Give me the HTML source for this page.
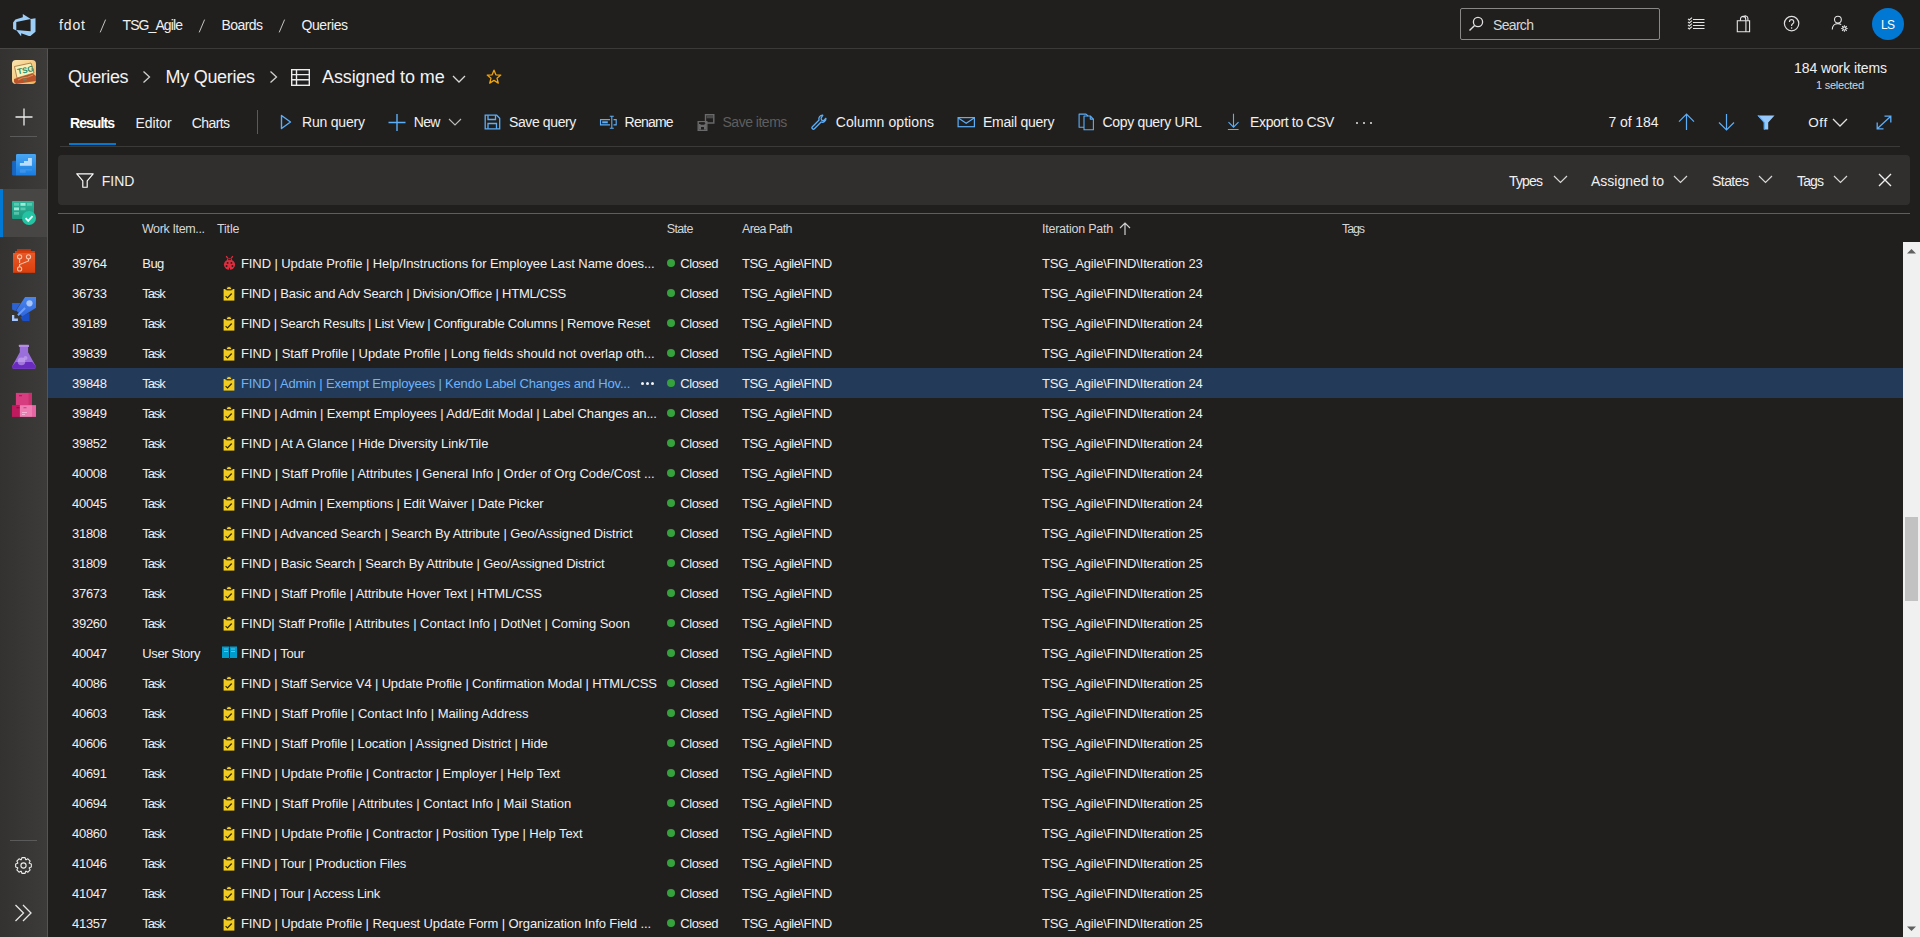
<!DOCTYPE html>
<html><head><meta charset="utf-8"><title>Queries - Boards</title>
<style>
html,body{margin:0;padding:0;width:1920px;height:937px;overflow:hidden;background:#201f1e;font-family:"Liberation Sans",sans-serif;}
.t{position:absolute;white-space:nowrap;}
.b{position:absolute;}
</style></head><body>
<div class="b" style="left:0px;top:48px;width:1920px;height:1px;background:#3b3a39"></div>
<svg class="b" style="left:13px;top:14px;" width="24" height="22" viewBox="0 0 24 22"><path d="M22.5 4.2v13.6l-5.6 4.6-8.7-3.2v3.2L3.3 16.1l14.3 1.1V4.9zM17.8 5.1L9.8 0v3.3L2.4 5.5 0.1 8.4v6.7l3.2 1.4V7.9z" fill="#9ccef8"/></svg>
<div class="t" style="left:59.00px;top:16.14px;font-size:14px;line-height:18px;color:#f0f0f0;letter-spacing:0.875px;">fdot</div>
<svg class="b" style="left:99px;top:19px;" width="8" height="14" viewBox="0 0 8 14"><path d="M6.6 0.6L1.2 13.4" stroke="#c4c4c4" stroke-width="1"/></svg>
<div class="t" style="left:122.50px;top:16.14px;font-size:14px;line-height:18px;color:#f0f0f0;letter-spacing:-0.906px;">TSG_Agile</div>
<svg class="b" style="left:198px;top:19px;" width="8" height="14" viewBox="0 0 8 14"><path d="M6.6 0.6L1.2 13.4" stroke="#c4c4c4" stroke-width="1"/></svg>
<div class="t" style="left:221.50px;top:16.14px;font-size:14px;line-height:18px;color:#f0f0f0;letter-spacing:-0.575px;">Boards</div>
<svg class="b" style="left:278px;top:19px;" width="8" height="14" viewBox="0 0 8 14"><path d="M6.6 0.6L1.2 13.4" stroke="#c4c4c4" stroke-width="1"/></svg>
<div class="t" style="left:301.50px;top:16.14px;font-size:14px;line-height:18px;color:#f0f0f0;letter-spacing:-0.417px;">Queries</div>
<div class="b" style="left:1460px;top:8px;width:200px;height:32px;box-sizing:border-box;border:1px solid #8a8886;border-radius:2px"></div>
<svg class="b" style="left:1468px;top:16px;" width="16" height="16" viewBox="0 0 16 16"><circle cx="10" cy="6" r="4.6" fill="none" stroke="#e0e0e0" stroke-width="1.3"/><path d="M6.6 9.4L1.5 14.5" stroke="#e0e0e0" stroke-width="1.4"/></svg>
<div class="t" style="left:1493.00px;top:16.14px;font-size:14px;line-height:18px;color:#d8d8d8;letter-spacing:-0.675px;">Search</div>
<svg class="b" style="left:1686px;top:16px;" width="20" height="16" viewBox="0 0 20 16"><g stroke="#e6e6e6" stroke-width="1.1" fill="none"><path d="M7 3.5h11.5M7 6.5h11.5M7 9.5h11.5M7 12.5h11.5"/><path d="M2 2.8l1.3 1.2L6 1.6M2 5.8l1.3 1.2L6 4.6M2 8.8l1.3 1.2L6 7.6M2 11.8l1.3 1.2L6 10.6"/></g></svg>
<svg class="b" style="left:1735px;top:15px;" width="18" height="18" viewBox="0 0 18 18"><g stroke="#e6e6e6" stroke-width="1.1" fill="none"><path d="M2.3 5.8h8.6v10.9H2.3zM10.9 5.8h3.7v10.9h-3.7"/><path d="M5.5 5.8V4a2.6 2.6 0 0 1 5.2 0v1.8M8.3 2.3a2.4 2.4 0 0 1 4.6 1v2.5"/></g></svg>
<svg class="b" style="left:1782px;top:15px;" width="18" height="18" viewBox="0 0 18 18"><g stroke="#e0e0e0" stroke-width="1.2" fill="none"><circle cx="9.6" cy="8.6" r="7.2"/><path d="M7.4 6.9a2.2 2.2 0 1 1 3.1 2c-.7.4-.9.8-.9 1.5v.6"/></g><circle cx="9.6" cy="12.9" r="0.75" fill="#e6e6e6"/></svg>
<svg class="b" style="left:1830px;top:15px;" width="20" height="18" viewBox="0 0 20 18"><g stroke="#e6e6e6" stroke-width="1.1" fill="none"><circle cx="7.9" cy="4.6" r="3.4"/><path d="M2.3 14.5c0-3.6 2.4-5.9 5.6-5.9 1.3 0 2.4.4 3.3 1"/><circle cx="14.4" cy="13.5" r="1.6"/><path d="M14.4 10.3v1.3M14.4 15.4v1.3M11.2 13.5h1.3M16.3 13.5h1.3M12.1 11.2l.9.9M15.8 14.9l.9.9M12.1 15.8l.9-.9M15.8 12.1l.9-.9"/></g></svg>
<div class="b" style="left:1872px;top:8px;width:32px;height:32px;border-radius:50%;background:#0078d4"></div>
<div class="t" style="left:1881.00px;top:16.84px;font-size:12px;line-height:16px;color:#ffffff;letter-spacing:-0.625px;">LS</div>
<div class="b" style="left:0px;top:49px;width:47px;height:888px;background:linear-gradient(to right,#333231,#3c3b3a)"></div>
<div class="b" style="left:47px;top:49px;width:1px;height:888px;background:#555555"></div>
<div class="b" style="left:0px;top:48px;width:48px;height:1px;background:#484746"></div>
<div class="b" style="left:0px;top:189px;width:47px;height:48px;background:#474645"></div>
<div class="b" style="left:0px;top:189px;width:3px;height:48px;background:#0078d4"></div>
<div class="b" style="left:10px;top:136px;width:27px;height:1px;background:#5a5a5a"></div>
<div class="b" style="left:10px;top:840px;width:27px;height:1px;background:#5a5a5a"></div>
<svg class="b" style="left:12px;top:60px;" width="24" height="24" viewBox="0 0 24 24"><defs><linearGradient id="tg" x1="0" y1="0" x2="1" y2="1"><stop offset="0" stop-color="#fbe6b0"/><stop offset="1" stop-color="#eeb25a"/></linearGradient></defs><rect width="24" height="24" rx="4" fill="url(#tg)"/><path d="M2 19l18-6 4 3v5l-20 3-2-2z" fill="#b8532a"/><path d="M6 20l4-2 6-1 5-2" stroke="#e9a36a" stroke-width="1.2" fill="none" opacity=".7"/><path d="M2.5 6.5L19 3l3 10-17 5z" fill="#f6f1b8" stroke="#9a5a2a" stroke-width=".7"/><text x="0" y="0" font-size="8" font-weight="bold" fill="#2a8a6a" font-family="Liberation Sans" transform="translate(6 14.5) rotate(-12)">TSG</text><ellipse cx="13" cy="19.5" rx="2" ry="1" fill="#3c9a78"/></svg>
<svg class="b" style="left:15px;top:108px;" width="18" height="18" viewBox="0 0 18 18"><path d="M9 0.5v17M0.5 9h17" stroke="#ececec" stroke-width="1.3"/></svg>
<svg class="b" style="left:12px;top:154px;" width="24" height="22" viewBox="0 0 24 22"><defs><linearGradient id="og" x1="0" y1="0" x2="0" y2="1"><stop offset="0" stop-color="#48a6f2"/><stop offset="1" stop-color="#1a7de0"/></linearGradient></defs><rect x="0.1" y="6.8" width="5" height="14.8" rx="1" fill="#1766c2"/><rect x="4" y="0" width="20" height="21.6" rx="1.2" fill="url(#og)"/><path d="M7.9 11.7H19.9V4H16V7.1H12V9H7.9z" fill="#b9ddfb"/><path d="M7.9 15.2h12v1.3h-12zM7.9 16.5h5.8v2.2H7.9z" fill="#3d94e8"/></svg>
<svg class="b" style="left:11px;top:199px;" width="28" height="28" viewBox="0 0 28 28"><defs><linearGradient id="bg1" x1="0" y1="0" x2="0" y2="1"><stop offset="0" stop-color="#2fb39a"/><stop offset="1" stop-color="#1a9a7e"/></linearGradient></defs><rect x="1" y="2" width="22" height="18" rx="1" fill="url(#bg1)"/><path d="M3 4h5v2.8H3zM9.5 4h5v2.8h-5zM16 4h5v2.8h-5zM3 8.5h5v2.8H3zM9.5 8.5h5v2.8h-5zM3 13h5v2.8H3z" fill="#7fe0c8" opacity=".55"/><path d="M9.5 4h5v2.8h-5zM3 8.5h5v2.8H3z" fill="#c8fff0" opacity=".6"/><circle cx="18" cy="19" r="7" fill="#22c4a4"/><path d="M14.6 19.2l2.6 2.6 4.3-4.6" stroke="#f0fff8" stroke-width="1.9" fill="none"/></svg>
<svg class="b" style="left:12px;top:248px;" width="24" height="26" viewBox="0 0 24 26"><defs><linearGradient id="rg" x1="0" y1="0" x2="0" y2="1"><stop offset="0" stop-color="#e65a2a"/><stop offset="1" stop-color="#dc3e0a"/></linearGradient></defs><rect x="5" y="1.1" width="13.9" height="3" fill="#c4360a"/><rect x="3" y="3" width="19.9" height="2.5" fill="#d63f0c"/><rect x="1" y="5" width="22.1" height="19.8" fill="url(#rg)"/><g stroke="#f6c4ac" stroke-width="1.1" fill="none"><circle cx="7.6" cy="8.8" r="2.1"/><circle cx="16.5" cy="8.8" r="2.1"/><circle cx="7.6" cy="20.9" r="2.1"/><path d="M7.6 10.9V15M16.5 10.9V13L7.6 16.5V18.8"/></g></svg>
<svg class="b" style="left:12px;top:296px;" width="25" height="26" viewBox="0 0 25 26"><defs><linearGradient id="pg" x1="0" y1="0" x2="0" y2="1"><stop offset="0" stop-color="#4a86ef"/><stop offset="1" stop-color="#2f66dc"/></linearGradient></defs><path d="M0.1 6.9h8.5L3.5 15 0.1 13.5z" fill="#2b63d6"/><path d="M8.3 21.3l9.2-4.8V25h-6.8z" fill="#1a4fc8"/><path d="M13.1 1.1H24v10.6L10.3 20.6 4.2 14.4z" fill="url(#pg)"/><circle cx="17.5" cy="7.3" r="3.1" fill="#a9c4f5"/><path d="M5.9 19.2L13.1 12" stroke="#6e9ff5" stroke-width="2"/><path d="M0 18.9h2.3v3.7h3.6V25H0z" fill="#a8c8ff"/></svg>
<svg class="b" style="left:12px;top:344px;" width="24" height="26" viewBox="0 0 24 26"><rect x="6.9" y="0.8" width="10.1" height="2.2" rx=".5" fill="#b48ce8"/><path d="M7.8 3H16.1V8.2L23.8 22.3Q24.6 24.8 22 24.8H2Q-.6 24.8 .2 22.3L7.8 8.2z" fill="#9a6fdc"/><path d="M3.8 17.9H20.2L23.8 22.3Q24.6 24.8 22 24.8H2Q-.6 24.8 .2 22.3z" fill="#6a2bc1"/><circle cx="9.5" cy="17.4" r="3.8" fill="#d2b4f4" opacity=".55"/><circle cx="13.5" cy="14" r="2" fill="#d2b4f4" opacity=".5"/></svg>
<svg class="b" style="left:12px;top:392px;" width="24" height="26" viewBox="0 0 24 26"><rect x="3.9" y="0.9" width="16.1" height="12.2" fill="#d83c80"/><rect x="16.5" y="0.9" width="3.5" height="12.2" fill="#c9306f"/><rect x="7" y="3" width="3" height="1.3" fill="#a82060"/><rect x="-0.1" y="13.1" width="7.9" height="11.8" fill="#c01a5e"/><rect x="7.8" y="13.1" width="12.2" height="11.8" fill="#ef7cb2"/><rect x="20" y="13.1" width="4" height="11.8" fill="#e566a2"/><rect x="4.5" y="15" width="3" height="1.3" fill="#901048"/><rect x="11.5" y="15" width="3" height="1.3" fill="#c84e88"/><rect x="10" y="20" width="5" height=".8" fill="#f8c0dc"/><rect x="10" y="22" width="3" height=".8" fill="#f8c0dc"/></svg>
<svg class="b" style="left:14px;top:855.5px;" width="19" height="19" viewBox="0 0 19 19"><g fill="none" stroke="#ececec" stroke-width="1.1" stroke-linejoin="round"><circle cx="9.5" cy="9.5" r="2.6"/><path d="M15.30 7.32 L17.34 7.91 L17.34 11.09 L15.30 11.68 L15.15 12.06 L16.17 13.92 L13.92 16.17 L12.06 15.15 L11.68 15.30 L11.09 17.34 L7.91 17.34 L7.32 15.30 L6.94 15.15 L5.08 16.17 L2.83 13.92 L3.85 12.06 L3.70 11.68 L1.66 11.09 L1.66 7.91 L3.70 7.32 L3.85 6.94 L2.83 5.08 L5.08 2.83 L6.94 3.85 L7.32 3.70 L7.91 1.66 L11.09 1.66 L11.68 3.70 L12.06 3.85 L13.92 2.83 L16.17 5.08 L15.15 6.94Z"/></g></svg>
<svg class="b" style="left:14px;top:904px;" width="19" height="18" viewBox="0 0 19 18"><g fill="none" stroke="#e6e6e6" stroke-width="1.3"><path d="M1.5 1l8 8-8 8M9 1l8 8-8 8"/></g></svg>
<div class="t" style="left:68.00px;top:65.75px;font-size:18px;line-height:23px;color:#f2f2f2;letter-spacing:-0.417px;">Queries</div>
<svg class="b" style="left:142px;top:70px;" width="10" height="14" viewBox="0 0 10 14"><path d="M1.5 1.5l6 5.5-6 5.5" stroke="#d0d0d0" stroke-width="1.3" fill="none"/></svg>
<div class="t" style="left:165.50px;top:65.75px;font-size:18px;line-height:23px;color:#f2f2f2;letter-spacing:-0.278px;">My Queries</div>
<svg class="b" style="left:269px;top:70px;" width="10" height="14" viewBox="0 0 10 14"><path d="M1.5 1.5l6 5.5-6 5.5" stroke="#d0d0d0" stroke-width="1.3" fill="none"/></svg>
<svg class="b" style="left:291px;top:69px;" width="19" height="17" viewBox="0 0 19 17"><g stroke="#ececec" stroke-width="1.4" fill="none"><rect x=".7" y=".7" width="17.6" height="15.6"/><path d="M1 5.6h17M1 10.8h17M5.5 1v15"/></g></svg>
<div class="t" style="left:322.00px;top:66.00px;font-size:18px;line-height:23px;color:#f2f2f2;letter-spacing:-0.106px;">Assigned to me</div>
<svg class="b" style="left:452px;top:75px;" width="14" height="8" viewBox="0 0 14 8"><path d="M1 1l6 6 6-6" stroke="#d8d8d8" stroke-width="1.3" fill="none"/></svg>
<svg class="b" style="left:486px;top:69px;" width="16" height="16" viewBox="0 0 16 16"><path d="M8 1.2l1.9 4.6 4.9.3-3.8 3.1 1.3 4.9L8 11.4l-4.3 2.7L5 9.2 1.2 6.1l4.9-.3z" fill="none" stroke="#f0a30c" stroke-width="1.3" stroke-linejoin="round"/></svg>
<div class="t" style="left:1794.00px;top:59.04px;font-size:14px;line-height:18px;color:#f0f0f0;letter-spacing:-0.087px;">184 work items</div>
<div class="t" style="left:1816.00px;top:78.08px;font-size:11px;line-height:14px;color:#d8d8d8;letter-spacing:-0.236px;">1 selected</div>
<div class="t" style="left:70.00px;top:114.14px;font-size:14px;line-height:18px;color:#ffffff;letter-spacing:-0.938px;font-weight:bold;">Results</div>
<div class="t" style="left:135.50px;top:114.14px;font-size:14px;line-height:18px;color:#f0f0f0;letter-spacing:-0.105px;">Editor</div>
<div class="t" style="left:191.80px;top:114.14px;font-size:14px;line-height:18px;color:#f0f0f0;letter-spacing:-0.590px;">Charts</div>
<div class="b" style="left:69px;top:143px;width:47px;height:2px;background:#0078d4"></div>
<div class="b" style="left:60px;top:146px;width:1840px;height:1px;background:#3b3a39"></div>
<div class="b" style="left:257px;top:110px;width:1px;height:24px;background:#5a5a5a"></div>
<svg class="b" style="left:280px;top:114px;" width="12" height="16" viewBox="0 0 12 16"><path d="M1.5 1.5l9 6.5-9 6.5z" fill="none" stroke="#5caef8" stroke-width="1.4" stroke-linejoin="round"/></svg>
<div class="t" style="left:302.00px;top:113.14px;font-size:14px;line-height:18px;color:#f0f0f0;letter-spacing:-0.203px;">Run query</div>
<svg class="b" style="left:388px;top:114px;" width="18" height="17" viewBox="0 0 18 17"><path d="M9 0v17M0.5 8.5h17" stroke="#5caef8" stroke-width="1.4"/></svg>
<div class="t" style="left:413.70px;top:113.14px;font-size:14px;line-height:18px;color:#f0f0f0;letter-spacing:-0.662px;">New</div>
<svg class="b" style="left:448px;top:118px;" width="14" height="8" viewBox="0 0 14 8"><path d="M1 1l6 6 6-6" stroke="#bdbdbd" stroke-width="1.1" fill="none"/></svg>
<svg class="b" style="left:484px;top:114px;" width="17" height="16" viewBox="0 0 17 16"><g stroke="#5caef8" stroke-width="1.3" fill="none"><path d="M1.2 1.2h11.5l3 3v10.6H1.2z"/><path d="M4 1.2v4.3h7.5V1.2M4 14.8V9.5h8.5v5.3"/></g></svg>
<div class="t" style="left:509.00px;top:113.14px;font-size:14px;line-height:18px;color:#f0f0f0;letter-spacing:-0.386px;">Save query</div>
<svg class="b" style="left:599px;top:115px;" width="19" height="14" viewBox="0 0 19 14"><g stroke="#5caef8" stroke-width="1.1" fill="none"><path d="M11 4.6H1.5v5.3H11M14.5 4.6h2.7v5.3h-2.7"/><path d="M12.8 1.3v12M10.8 1.3h4M10.8 13.3h4"/></g><path d="M3.2 6.3h5.6v2H3.2z" fill="#5caef8"/></svg>
<div class="t" style="left:624.60px;top:113.14px;font-size:14px;line-height:18px;color:#f0f0f0;letter-spacing:-0.795px;">Rename</div>
<svg class="b" style="left:697px;top:114px;" width="18" height="17" viewBox="0 0 18 17"><g fill="none" stroke="#6a6a6a" stroke-width="1.4"><path d="M8.5 0.7h8.3v8.3h-8.3z"/><path d="M1.2 7.6h8.6v8.6H1.2z"/></g><path d="M9.5 1.5h6.5v2.8H9.5z" fill="#4a4a4a"/><path d="M2 10h7v5.5H2z" fill="#6a6a6a"/><path d="M3.5 8.4h4v2.3h-4zM4 13h3v2.5H4z" fill="#201f1e"/></svg>
<div class="t" style="left:722.50px;top:113.14px;font-size:14px;line-height:18px;color:#5e5e5e;letter-spacing:-0.494px;">Save items</div>
<svg class="b" style="left:811px;top:114px;" width="17" height="16" viewBox="0 0 17 16"><path d="M11.8 1.2a3.6 3.6 0 0 0-3.7 4.8L1.4 12.7a1.4 1.4 0 0 0 2 2l6.7-6.7a3.6 3.6 0 0 0 4.8-3.7l-2.3 2.3-2.1-.4-.4-2.1z" fill="none" stroke="#5caef8" stroke-width="1.3" stroke-linejoin="round"/></svg>
<div class="t" style="left:835.80px;top:113.14px;font-size:14px;line-height:18px;color:#f0f0f0;letter-spacing:0.073px;">Column options</div>
<svg class="b" style="left:957px;top:117px;" width="18" height="11" viewBox="0 0 18 11"><g stroke="#5caef8" stroke-width="1.2" fill="none"><rect x="1.1" y=".6" width="16.3" height="9.1"/><path d="M1.3 1l7.9 5.3L17.1 1"/></g></svg>
<div class="t" style="left:983.00px;top:113.14px;font-size:14px;line-height:18px;color:#f0f0f0;letter-spacing:-0.237px;">Email query</div>
<svg class="b" style="left:1078px;top:113px;" width="17" height="18" viewBox="0 0 17 18"><g stroke="#5caef8" stroke-width="1.1" fill="none" stroke-linejoin="round"><path d="M6 14.2H1.1V1.1H8L10 3"/><path d="M6 3H12.3L15.4 6.1V16.7H6z"/><path d="M12.3 3V6.1H15.4"/></g></svg>
<div class="t" style="left:1102.50px;top:113.14px;font-size:14px;line-height:18px;color:#f0f0f0;letter-spacing:-0.327px;">Copy query URL</div>
<svg class="b" style="left:1227px;top:113px;" width="13" height="18" viewBox="0 0 13 18"><g stroke="#5caef8" stroke-width="1.1" fill="none"><path d="M6.5 0.8V14.2M1.5 9.2L6.5 14.2L11.5 9.2M0.9 16.5H11.6"/></g></svg>
<div class="t" style="left:1250.00px;top:113.14px;font-size:14px;line-height:18px;color:#f0f0f0;letter-spacing:-0.354px;">Export to CSV</div>
<div class="b" style="left:1356px;top:122px;width:2.4px;height:2.4px;border-radius:50%;background:#e6e6e6"></div>
<div class="b" style="left:1363px;top:122px;width:2.4px;height:2.4px;border-radius:50%;background:#e6e6e6"></div>
<div class="b" style="left:1370px;top:122px;width:2.4px;height:2.4px;border-radius:50%;background:#e6e6e6"></div>
<div class="t" style="left:1608.50px;top:113.14px;font-size:14px;line-height:18px;color:#f0f0f0;letter-spacing:-0.089px;">7 of 184</div>
<svg class="b" style="left:1678px;top:113px;" width="17" height="17" viewBox="0 0 17 17"><g stroke="#5caef8" stroke-width="1.2" fill="none"><path d="M8.5 1.2v15.8M1 8.7L8.5 1.2 16 8.7"/></g></svg>
<svg class="b" style="left:1718px;top:114px;" width="17" height="17" viewBox="0 0 17 17"><g stroke="#5caef8" stroke-width="1.2" fill="none"><path d="M8.5 0v16M1 8.5l7.5 7.5 7.5-7.5"/></g></svg>
<svg class="b" style="left:1757px;top:115px;" width="18" height="15" viewBox="0 0 18 15"><path d="M0.5 0.5h17l-6.3 7v7H6.8v-7z" fill="#96c8fc"/><path d="M0.5 0.5l6.3 7v7h1.2v-7L1.8 0.5z" fill="#5aa6f0"/></svg>
<div class="t" style="left:1808.30px;top:113.72px;font-size:13.5px;line-height:18px;color:#f0f0f0;letter-spacing:0.562px;">Off</div>
<svg class="b" style="left:1832px;top:118px;" width="16" height="9" viewBox="0 0 16 9"><path d="M1 1l7 7 7-7" stroke="#e0e0e0" stroke-width="1.3" fill="none"/></svg>
<svg class="b" style="left:1876px;top:115px;" width="16" height="15" viewBox="0 0 16 15"><g stroke="#5caef8" stroke-width="1.3" fill="none"><path d="M1.2 13.8L14.8 1.2M8.5 1.2h6.3v6.3M1.2 7.5v6.3h6.3"/></g></svg>
<div class="b" style="left:58px;top:155px;width:1852px;height:50px;background:#302f2e;border-radius:4px"></div>
<svg class="b" style="left:76px;top:173px;" width="18" height="15" viewBox="0 0 18 15"><path d="M0.8 0.8h16.4l-6 7v6.4H6.8V7.8z" fill="none" stroke="#ffffff" stroke-width="1.15" stroke-linejoin="round"/></svg>
<div class="t" style="left:101.80px;top:172.14px;font-size:14px;line-height:18px;color:#f0f0f0;">FIND</div>
<div class="t" style="left:1509.00px;top:172.14px;font-size:14px;line-height:18px;color:#f0f0f0;letter-spacing:-0.844px;">Types</div>
<svg class="b" style="left:1553px;top:175px;" width="15" height="9" viewBox="0 0 15 9"><path d="M1 1l6.5 6.5L14 1" stroke="#d8d8d8" stroke-width="1.2" fill="none"/></svg>
<div class="t" style="left:1591.00px;top:172.14px;font-size:14px;line-height:18px;color:#f0f0f0;letter-spacing:-0.013px;">Assigned to</div>
<svg class="b" style="left:1673px;top:175px;" width="15" height="9" viewBox="0 0 15 9"><path d="M1 1l6.5 6.5L14 1" stroke="#d8d8d8" stroke-width="1.2" fill="none"/></svg>
<div class="t" style="left:1712.00px;top:172.14px;font-size:14px;line-height:18px;color:#f0f0f0;letter-spacing:-0.550px;">States</div>
<svg class="b" style="left:1758px;top:175px;" width="15" height="9" viewBox="0 0 15 9"><path d="M1 1l6.5 6.5L14 1" stroke="#d8d8d8" stroke-width="1.2" fill="none"/></svg>
<div class="t" style="left:1797.00px;top:172.14px;font-size:14px;line-height:18px;color:#f0f0f0;letter-spacing:-0.875px;">Tags</div>
<svg class="b" style="left:1833px;top:175px;" width="15" height="9" viewBox="0 0 15 9"><path d="M1 1l6.5 6.5L14 1" stroke="#d8d8d8" stroke-width="1.2" fill="none"/></svg>
<svg class="b" style="left:1878px;top:173px;" width="14" height="14" viewBox="0 0 14 14"><path d="M1 1l12 12M13 1L1 13" stroke="#f0f0f0" stroke-width="1.4"/></svg>
<div class="b" style="left:58px;top:213px;width:1852px;height:1px;background:#5f5e5d"></div>
<div class="t" style="left:72.00px;top:220.66px;font-size:12.5px;line-height:16px;color:#d6d6d6;">ID</div>
<div class="t" style="left:141.90px;top:220.66px;font-size:12.5px;line-height:16px;color:#d6d6d6;letter-spacing:-0.366px;">Work Item...</div>
<div class="t" style="left:217.00px;top:220.66px;font-size:12.5px;line-height:16px;color:#d6d6d6;letter-spacing:-0.181px;">Title</div>
<div class="t" style="left:666.80px;top:220.66px;font-size:12.5px;line-height:16px;color:#d6d6d6;letter-spacing:-0.656px;">State</div>
<div class="t" style="left:742.00px;top:220.66px;font-size:12.5px;line-height:16px;color:#d6d6d6;letter-spacing:-0.641px;">Area Path</div>
<div class="t" style="left:1042.00px;top:220.66px;font-size:12.5px;line-height:16px;color:#d6d6d6;letter-spacing:-0.244px;">Iteration Path</div>
<svg class="b" style="left:1119px;top:222px;" width="12" height="13" viewBox="0 0 12 13"><path d="M6 1v12M1 6l5-5 5 5" stroke="#d0d0d0" stroke-width="1.2" fill="none"/></svg>
<div class="t" style="left:1342.00px;top:220.66px;font-size:12.5px;line-height:16px;color:#d6d6d6;letter-spacing:-1.125px;">Tags</div>
<div class="t" style="left:72.00px;top:254.99px;font-size:13px;line-height:17px;color:#f0f0f0;letter-spacing:-0.281px;">39764</div>
<div class="t" style="left:142.30px;top:254.99px;font-size:13px;line-height:17px;color:#f0f0f0;letter-spacing:-0.562px;">Bug</div>
<svg class="b" style="left:223px;top:255px;" width="13" height="15" viewBox="0 0 13 15"><g fill="#dc2e3e"><path d="M3.2 1.2l1.6 2.2M9.8 1.2L8.2 3.4" stroke="#dc2e3e" stroke-width="1.3"/><path d="M3.8 5.5a2.7 2.3 0 0 1 5.4 0z"/><ellipse cx="6.5" cy="9.6" rx="5.6" ry="5.2"/></g><path d="M5 4.6h3" stroke="#201f1e" stroke-width=".9"/><path d="M6.5 12.8v2.2" stroke="#201f1e" stroke-width=".9"/><circle cx="4.6" cy="7.9" r=".95" fill="#201f1e"/><circle cx="8.4" cy="7.9" r=".95" fill="#201f1e"/><circle cx="3.6" cy="11" r=".95" fill="#201f1e"/><circle cx="9.4" cy="11" r=".95" fill="#201f1e"/></svg>
<div class="t" style="left:241.00px;top:254.99px;font-size:13px;line-height:17px;color:#f0f0f0;letter-spacing:-0.090px;">FIND | Update Profile | Help/Instructions for Employee Last Name does...</div>
<div class="b" style="left:667px;top:259px;width:8px;height:8px;border-radius:50%;background:#35a23d"></div>
<div class="t" style="left:680.30px;top:254.99px;font-size:13px;line-height:17px;color:#f0f0f0;letter-spacing:-0.440px;">Closed</div>
<div class="t" style="left:742.10px;top:254.99px;font-size:13px;line-height:17px;color:#f0f0f0;letter-spacing:-0.512px;">TSG_Agile\FIND</div>
<div class="t" style="left:1042.10px;top:254.99px;font-size:13px;line-height:17px;color:#f0f0f0;letter-spacing:-0.185px;">TSG_Agile\FIND\Iteration 23</div>
<div class="t" style="left:72.00px;top:284.99px;font-size:13px;line-height:17px;color:#f0f0f0;letter-spacing:-0.281px;">36733</div>
<div class="t" style="left:142.30px;top:284.99px;font-size:13px;line-height:17px;color:#f0f0f0;letter-spacing:-1.092px;">Task</div>
<svg class="b" style="left:223px;top:285.5px;" width="12" height="15" viewBox="0 0 12 15"><path d="M0.6 3h10.8v11.6H0.6z" fill="#f2cc1e"/><path d="M2.8 3.6L4.6 0.6h2.8l1.8 3z" fill="#f2cc1e" stroke="#201f1e" stroke-width=".9"/><path d="M3.6 3.9h4.8" stroke="#3a3000" stroke-width=".9"/><path d="M2.6 10.2l1.9 1.7 4.2-4.4" stroke="#2a2400" stroke-width="1.1" fill="none"/></svg>
<div class="t" style="left:241.00px;top:284.99px;font-size:13px;line-height:17px;color:#f0f0f0;letter-spacing:-0.232px;">FIND | Basic and Adv Search | Division/Office | HTML/CSS</div>
<div class="b" style="left:667px;top:289px;width:8px;height:8px;border-radius:50%;background:#35a23d"></div>
<div class="t" style="left:680.30px;top:284.99px;font-size:13px;line-height:17px;color:#f0f0f0;letter-spacing:-0.440px;">Closed</div>
<div class="t" style="left:742.10px;top:284.99px;font-size:13px;line-height:17px;color:#f0f0f0;letter-spacing:-0.512px;">TSG_Agile\FIND</div>
<div class="t" style="left:1042.10px;top:284.99px;font-size:13px;line-height:17px;color:#f0f0f0;letter-spacing:-0.185px;">TSG_Agile\FIND\Iteration 24</div>
<div class="t" style="left:72.00px;top:314.99px;font-size:13px;line-height:17px;color:#f0f0f0;letter-spacing:-0.281px;">39189</div>
<div class="t" style="left:142.30px;top:314.99px;font-size:13px;line-height:17px;color:#f0f0f0;letter-spacing:-1.092px;">Task</div>
<svg class="b" style="left:223px;top:315.5px;" width="12" height="15" viewBox="0 0 12 15"><path d="M0.6 3h10.8v11.6H0.6z" fill="#f2cc1e"/><path d="M2.8 3.6L4.6 0.6h2.8l1.8 3z" fill="#f2cc1e" stroke="#201f1e" stroke-width=".9"/><path d="M3.6 3.9h4.8" stroke="#3a3000" stroke-width=".9"/><path d="M2.6 10.2l1.9 1.7 4.2-4.4" stroke="#2a2400" stroke-width="1.1" fill="none"/></svg>
<div class="t" style="left:241.00px;top:314.99px;font-size:13px;line-height:17px;color:#f0f0f0;letter-spacing:-0.258px;">FIND | Search Results | List View | Configurable Columns | Remove Reset</div>
<div class="b" style="left:667px;top:319px;width:8px;height:8px;border-radius:50%;background:#35a23d"></div>
<div class="t" style="left:680.30px;top:314.99px;font-size:13px;line-height:17px;color:#f0f0f0;letter-spacing:-0.440px;">Closed</div>
<div class="t" style="left:742.10px;top:314.99px;font-size:13px;line-height:17px;color:#f0f0f0;letter-spacing:-0.512px;">TSG_Agile\FIND</div>
<div class="t" style="left:1042.10px;top:314.99px;font-size:13px;line-height:17px;color:#f0f0f0;letter-spacing:-0.185px;">TSG_Agile\FIND\Iteration 24</div>
<div class="t" style="left:72.00px;top:344.99px;font-size:13px;line-height:17px;color:#f0f0f0;letter-spacing:-0.281px;">39839</div>
<div class="t" style="left:142.30px;top:344.99px;font-size:13px;line-height:17px;color:#f0f0f0;letter-spacing:-1.092px;">Task</div>
<svg class="b" style="left:223px;top:345.5px;" width="12" height="15" viewBox="0 0 12 15"><path d="M0.6 3h10.8v11.6H0.6z" fill="#f2cc1e"/><path d="M2.8 3.6L4.6 0.6h2.8l1.8 3z" fill="#f2cc1e" stroke="#201f1e" stroke-width=".9"/><path d="M3.6 3.9h4.8" stroke="#3a3000" stroke-width=".9"/><path d="M2.6 10.2l1.9 1.7 4.2-4.4" stroke="#2a2400" stroke-width="1.1" fill="none"/></svg>
<div class="t" style="left:241.00px;top:344.99px;font-size:13px;line-height:17px;color:#f0f0f0;letter-spacing:-0.041px;">FIND | Staff Profile | Update Profile | Long fields should not overlap oth...</div>
<div class="b" style="left:667px;top:349px;width:8px;height:8px;border-radius:50%;background:#35a23d"></div>
<div class="t" style="left:680.30px;top:344.99px;font-size:13px;line-height:17px;color:#f0f0f0;letter-spacing:-0.440px;">Closed</div>
<div class="t" style="left:742.10px;top:344.99px;font-size:13px;line-height:17px;color:#f0f0f0;letter-spacing:-0.512px;">TSG_Agile\FIND</div>
<div class="t" style="left:1042.10px;top:344.99px;font-size:13px;line-height:17px;color:#f0f0f0;letter-spacing:-0.185px;">TSG_Agile\FIND\Iteration 24</div>
<div class="b" style="left:48px;top:368px;width:1855px;height:30px;background:#233a58"></div>
<div class="t" style="left:72.00px;top:374.99px;font-size:13px;line-height:17px;color:#f0f0f0;letter-spacing:-0.281px;">39848</div>
<div class="t" style="left:142.30px;top:374.99px;font-size:13px;line-height:17px;color:#f0f0f0;letter-spacing:-1.092px;">Task</div>
<svg class="b" style="left:223px;top:375.5px;" width="12" height="15" viewBox="0 0 12 15"><path d="M0.6 3h10.8v11.6H0.6z" fill="#f2cc1e"/><path d="M2.8 3.6L4.6 0.6h2.8l1.8 3z" fill="#f2cc1e" stroke="#233a58" stroke-width=".9"/><path d="M3.6 3.9h4.8" stroke="#3a3000" stroke-width=".9"/><path d="M2.6 10.2l1.9 1.7 4.2-4.4" stroke="#2a2400" stroke-width="1.1" fill="none"/></svg>
<div class="t" style="left:241.00px;top:374.99px;font-size:13px;line-height:17px;color:#70b4f8;letter-spacing:-0.182px;">FIND | Admin | Exempt Employees | Kendo Label Changes and Hov...</div>
<div class="b" style="left:640.6500000000001px;top:381.75px;width:3.1px;height:3.1px;border-radius:50%;background:#f4f4f4"></div>
<div class="b" style="left:645.95px;top:381.75px;width:3.1px;height:3.1px;border-radius:50%;background:#f4f4f4"></div>
<div class="b" style="left:651.25px;top:381.75px;width:3.1px;height:3.1px;border-radius:50%;background:#f4f4f4"></div>
<div class="b" style="left:667px;top:379px;width:8px;height:8px;border-radius:50%;background:#35a23d"></div>
<div class="t" style="left:680.30px;top:374.99px;font-size:13px;line-height:17px;color:#f0f0f0;letter-spacing:-0.440px;">Closed</div>
<div class="t" style="left:742.10px;top:374.99px;font-size:13px;line-height:17px;color:#f0f0f0;letter-spacing:-0.512px;">TSG_Agile\FIND</div>
<div class="t" style="left:1042.10px;top:374.99px;font-size:13px;line-height:17px;color:#f0f0f0;letter-spacing:-0.185px;">TSG_Agile\FIND\Iteration 24</div>
<div class="t" style="left:72.00px;top:404.99px;font-size:13px;line-height:17px;color:#f0f0f0;letter-spacing:-0.281px;">39849</div>
<div class="t" style="left:142.30px;top:404.99px;font-size:13px;line-height:17px;color:#f0f0f0;letter-spacing:-1.092px;">Task</div>
<svg class="b" style="left:223px;top:405.5px;" width="12" height="15" viewBox="0 0 12 15"><path d="M0.6 3h10.8v11.6H0.6z" fill="#f2cc1e"/><path d="M2.8 3.6L4.6 0.6h2.8l1.8 3z" fill="#f2cc1e" stroke="#201f1e" stroke-width=".9"/><path d="M3.6 3.9h4.8" stroke="#3a3000" stroke-width=".9"/><path d="M2.6 10.2l1.9 1.7 4.2-4.4" stroke="#2a2400" stroke-width="1.1" fill="none"/></svg>
<div class="t" style="left:241.00px;top:404.99px;font-size:13px;line-height:17px;color:#f0f0f0;letter-spacing:-0.126px;">FIND | Admin | Exempt Employees | Add/Edit Modal | Label Changes an...</div>
<div class="b" style="left:667px;top:409px;width:8px;height:8px;border-radius:50%;background:#35a23d"></div>
<div class="t" style="left:680.30px;top:404.99px;font-size:13px;line-height:17px;color:#f0f0f0;letter-spacing:-0.440px;">Closed</div>
<div class="t" style="left:742.10px;top:404.99px;font-size:13px;line-height:17px;color:#f0f0f0;letter-spacing:-0.512px;">TSG_Agile\FIND</div>
<div class="t" style="left:1042.10px;top:404.99px;font-size:13px;line-height:17px;color:#f0f0f0;letter-spacing:-0.185px;">TSG_Agile\FIND\Iteration 24</div>
<div class="t" style="left:72.00px;top:434.99px;font-size:13px;line-height:17px;color:#f0f0f0;letter-spacing:-0.281px;">39852</div>
<div class="t" style="left:142.30px;top:434.99px;font-size:13px;line-height:17px;color:#f0f0f0;letter-spacing:-1.092px;">Task</div>
<svg class="b" style="left:223px;top:435.5px;" width="12" height="15" viewBox="0 0 12 15"><path d="M0.6 3h10.8v11.6H0.6z" fill="#f2cc1e"/><path d="M2.8 3.6L4.6 0.6h2.8l1.8 3z" fill="#f2cc1e" stroke="#201f1e" stroke-width=".9"/><path d="M3.6 3.9h4.8" stroke="#3a3000" stroke-width=".9"/><path d="M2.6 10.2l1.9 1.7 4.2-4.4" stroke="#2a2400" stroke-width="1.1" fill="none"/></svg>
<div class="t" style="left:241.00px;top:434.99px;font-size:13px;line-height:17px;color:#f0f0f0;letter-spacing:-0.070px;">FIND | At A Glance | Hide Diversity Link/Tile</div>
<div class="b" style="left:667px;top:439px;width:8px;height:8px;border-radius:50%;background:#35a23d"></div>
<div class="t" style="left:680.30px;top:434.99px;font-size:13px;line-height:17px;color:#f0f0f0;letter-spacing:-0.440px;">Closed</div>
<div class="t" style="left:742.10px;top:434.99px;font-size:13px;line-height:17px;color:#f0f0f0;letter-spacing:-0.512px;">TSG_Agile\FIND</div>
<div class="t" style="left:1042.10px;top:434.99px;font-size:13px;line-height:17px;color:#f0f0f0;letter-spacing:-0.185px;">TSG_Agile\FIND\Iteration 24</div>
<div class="t" style="left:72.00px;top:464.99px;font-size:13px;line-height:17px;color:#f0f0f0;letter-spacing:-0.281px;">40008</div>
<div class="t" style="left:142.30px;top:464.99px;font-size:13px;line-height:17px;color:#f0f0f0;letter-spacing:-1.092px;">Task</div>
<svg class="b" style="left:223px;top:465.5px;" width="12" height="15" viewBox="0 0 12 15"><path d="M0.6 3h10.8v11.6H0.6z" fill="#f2cc1e"/><path d="M2.8 3.6L4.6 0.6h2.8l1.8 3z" fill="#f2cc1e" stroke="#201f1e" stroke-width=".9"/><path d="M3.6 3.9h4.8" stroke="#3a3000" stroke-width=".9"/><path d="M2.6 10.2l1.9 1.7 4.2-4.4" stroke="#2a2400" stroke-width="1.1" fill="none"/></svg>
<div class="t" style="left:241.00px;top:464.99px;font-size:13px;line-height:17px;color:#f0f0f0;letter-spacing:-0.056px;">FIND | Staff Profile | Attributes | General Info | Order of Org Code/Cost ...</div>
<div class="b" style="left:667px;top:469px;width:8px;height:8px;border-radius:50%;background:#35a23d"></div>
<div class="t" style="left:680.30px;top:464.99px;font-size:13px;line-height:17px;color:#f0f0f0;letter-spacing:-0.440px;">Closed</div>
<div class="t" style="left:742.10px;top:464.99px;font-size:13px;line-height:17px;color:#f0f0f0;letter-spacing:-0.512px;">TSG_Agile\FIND</div>
<div class="t" style="left:1042.10px;top:464.99px;font-size:13px;line-height:17px;color:#f0f0f0;letter-spacing:-0.185px;">TSG_Agile\FIND\Iteration 24</div>
<div class="t" style="left:72.00px;top:494.99px;font-size:13px;line-height:17px;color:#f0f0f0;letter-spacing:-0.281px;">40045</div>
<div class="t" style="left:142.30px;top:494.99px;font-size:13px;line-height:17px;color:#f0f0f0;letter-spacing:-1.092px;">Task</div>
<svg class="b" style="left:223px;top:495.5px;" width="12" height="15" viewBox="0 0 12 15"><path d="M0.6 3h10.8v11.6H0.6z" fill="#f2cc1e"/><path d="M2.8 3.6L4.6 0.6h2.8l1.8 3z" fill="#f2cc1e" stroke="#201f1e" stroke-width=".9"/><path d="M3.6 3.9h4.8" stroke="#3a3000" stroke-width=".9"/><path d="M2.6 10.2l1.9 1.7 4.2-4.4" stroke="#2a2400" stroke-width="1.1" fill="none"/></svg>
<div class="t" style="left:241.00px;top:494.99px;font-size:13px;line-height:17px;color:#f0f0f0;letter-spacing:-0.140px;">FIND | Admin | Exemptions | Edit Waiver | Date Picker</div>
<div class="b" style="left:667px;top:499px;width:8px;height:8px;border-radius:50%;background:#35a23d"></div>
<div class="t" style="left:680.30px;top:494.99px;font-size:13px;line-height:17px;color:#f0f0f0;letter-spacing:-0.440px;">Closed</div>
<div class="t" style="left:742.10px;top:494.99px;font-size:13px;line-height:17px;color:#f0f0f0;letter-spacing:-0.512px;">TSG_Agile\FIND</div>
<div class="t" style="left:1042.10px;top:494.99px;font-size:13px;line-height:17px;color:#f0f0f0;letter-spacing:-0.185px;">TSG_Agile\FIND\Iteration 24</div>
<div class="t" style="left:72.00px;top:524.99px;font-size:13px;line-height:17px;color:#f0f0f0;letter-spacing:-0.281px;">31808</div>
<div class="t" style="left:142.30px;top:524.99px;font-size:13px;line-height:17px;color:#f0f0f0;letter-spacing:-1.092px;">Task</div>
<svg class="b" style="left:223px;top:525.5px;" width="12" height="15" viewBox="0 0 12 15"><path d="M0.6 3h10.8v11.6H0.6z" fill="#f2cc1e"/><path d="M2.8 3.6L4.6 0.6h2.8l1.8 3z" fill="#f2cc1e" stroke="#201f1e" stroke-width=".9"/><path d="M3.6 3.9h4.8" stroke="#3a3000" stroke-width=".9"/><path d="M2.6 10.2l1.9 1.7 4.2-4.4" stroke="#2a2400" stroke-width="1.1" fill="none"/></svg>
<div class="t" style="left:241.00px;top:524.99px;font-size:13px;line-height:17px;color:#f0f0f0;letter-spacing:-0.131px;">FIND | Advanced Search | Search By Attribute | Geo/Assigned District</div>
<div class="b" style="left:667px;top:529px;width:8px;height:8px;border-radius:50%;background:#35a23d"></div>
<div class="t" style="left:680.30px;top:524.99px;font-size:13px;line-height:17px;color:#f0f0f0;letter-spacing:-0.440px;">Closed</div>
<div class="t" style="left:742.10px;top:524.99px;font-size:13px;line-height:17px;color:#f0f0f0;letter-spacing:-0.512px;">TSG_Agile\FIND</div>
<div class="t" style="left:1042.10px;top:524.99px;font-size:13px;line-height:17px;color:#f0f0f0;letter-spacing:-0.185px;">TSG_Agile\FIND\Iteration 25</div>
<div class="t" style="left:72.00px;top:554.99px;font-size:13px;line-height:17px;color:#f0f0f0;letter-spacing:-0.281px;">31809</div>
<div class="t" style="left:142.30px;top:554.99px;font-size:13px;line-height:17px;color:#f0f0f0;letter-spacing:-1.092px;">Task</div>
<svg class="b" style="left:223px;top:555.5px;" width="12" height="15" viewBox="0 0 12 15"><path d="M0.6 3h10.8v11.6H0.6z" fill="#f2cc1e"/><path d="M2.8 3.6L4.6 0.6h2.8l1.8 3z" fill="#f2cc1e" stroke="#201f1e" stroke-width=".9"/><path d="M3.6 3.9h4.8" stroke="#3a3000" stroke-width=".9"/><path d="M2.6 10.2l1.9 1.7 4.2-4.4" stroke="#2a2400" stroke-width="1.1" fill="none"/></svg>
<div class="t" style="left:241.00px;top:554.99px;font-size:13px;line-height:17px;color:#f0f0f0;letter-spacing:-0.178px;">FIND | Basic Search | Search By Attribute | Geo/Assigned District</div>
<div class="b" style="left:667px;top:559px;width:8px;height:8px;border-radius:50%;background:#35a23d"></div>
<div class="t" style="left:680.30px;top:554.99px;font-size:13px;line-height:17px;color:#f0f0f0;letter-spacing:-0.440px;">Closed</div>
<div class="t" style="left:742.10px;top:554.99px;font-size:13px;line-height:17px;color:#f0f0f0;letter-spacing:-0.512px;">TSG_Agile\FIND</div>
<div class="t" style="left:1042.10px;top:554.99px;font-size:13px;line-height:17px;color:#f0f0f0;letter-spacing:-0.185px;">TSG_Agile\FIND\Iteration 25</div>
<div class="t" style="left:72.00px;top:584.99px;font-size:13px;line-height:17px;color:#f0f0f0;letter-spacing:-0.281px;">37673</div>
<div class="t" style="left:142.30px;top:584.99px;font-size:13px;line-height:17px;color:#f0f0f0;letter-spacing:-1.092px;">Task</div>
<svg class="b" style="left:223px;top:585.5px;" width="12" height="15" viewBox="0 0 12 15"><path d="M0.6 3h10.8v11.6H0.6z" fill="#f2cc1e"/><path d="M2.8 3.6L4.6 0.6h2.8l1.8 3z" fill="#f2cc1e" stroke="#201f1e" stroke-width=".9"/><path d="M3.6 3.9h4.8" stroke="#3a3000" stroke-width=".9"/><path d="M2.6 10.2l1.9 1.7 4.2-4.4" stroke="#2a2400" stroke-width="1.1" fill="none"/></svg>
<div class="t" style="left:241.00px;top:584.99px;font-size:13px;line-height:17px;color:#f0f0f0;letter-spacing:-0.134px;">FIND | Staff Profile | Attribute Hover Text | HTML/CSS</div>
<div class="b" style="left:667px;top:589px;width:8px;height:8px;border-radius:50%;background:#35a23d"></div>
<div class="t" style="left:680.30px;top:584.99px;font-size:13px;line-height:17px;color:#f0f0f0;letter-spacing:-0.440px;">Closed</div>
<div class="t" style="left:742.10px;top:584.99px;font-size:13px;line-height:17px;color:#f0f0f0;letter-spacing:-0.512px;">TSG_Agile\FIND</div>
<div class="t" style="left:1042.10px;top:584.99px;font-size:13px;line-height:17px;color:#f0f0f0;letter-spacing:-0.185px;">TSG_Agile\FIND\Iteration 25</div>
<div class="t" style="left:72.00px;top:614.99px;font-size:13px;line-height:17px;color:#f0f0f0;letter-spacing:-0.281px;">39260</div>
<div class="t" style="left:142.30px;top:614.99px;font-size:13px;line-height:17px;color:#f0f0f0;letter-spacing:-1.092px;">Task</div>
<svg class="b" style="left:223px;top:615.5px;" width="12" height="15" viewBox="0 0 12 15"><path d="M0.6 3h10.8v11.6H0.6z" fill="#f2cc1e"/><path d="M2.8 3.6L4.6 0.6h2.8l1.8 3z" fill="#f2cc1e" stroke="#201f1e" stroke-width=".9"/><path d="M3.6 3.9h4.8" stroke="#3a3000" stroke-width=".9"/><path d="M2.6 10.2l1.9 1.7 4.2-4.4" stroke="#2a2400" stroke-width="1.1" fill="none"/></svg>
<div class="t" style="left:241.00px;top:614.99px;font-size:13px;line-height:17px;color:#f0f0f0;letter-spacing:-0.017px;">FIND| Staff Profile | Attributes | Contact Info | DotNet | Coming Soon</div>
<div class="b" style="left:667px;top:619px;width:8px;height:8px;border-radius:50%;background:#35a23d"></div>
<div class="t" style="left:680.30px;top:614.99px;font-size:13px;line-height:17px;color:#f0f0f0;letter-spacing:-0.440px;">Closed</div>
<div class="t" style="left:742.10px;top:614.99px;font-size:13px;line-height:17px;color:#f0f0f0;letter-spacing:-0.512px;">TSG_Agile\FIND</div>
<div class="t" style="left:1042.10px;top:614.99px;font-size:13px;line-height:17px;color:#f0f0f0;letter-spacing:-0.185px;">TSG_Agile\FIND\Iteration 25</div>
<div class="t" style="left:72.00px;top:644.99px;font-size:13px;line-height:17px;color:#f0f0f0;letter-spacing:-0.281px;">40047</div>
<div class="t" style="left:142.30px;top:644.99px;font-size:13px;line-height:17px;color:#f0f0f0;letter-spacing:-0.364px;">User Story</div>
<svg class="b" style="left:222px;top:646px;" width="15" height="13" viewBox="0 0 15 13"><path d="M0 .5h6.5c.5 0 1 .4 1 .9C7.5 1 8 .5 8.5.5H15V12H8.5c-.5 0-1 .4-1 .8 0-.4-.5-.8-1-.8H0z" fill="#009ccc"/><path d="M7.5 1.5V12" stroke="#201f1e" stroke-width="1"/><path d="M2 3h4M2 5.5h4M9 3h4M9 5.5h4" stroke="#5ac8ec" stroke-width=".9"/></svg>
<div class="t" style="left:241.00px;top:644.99px;font-size:13px;line-height:17px;color:#f0f0f0;letter-spacing:-0.220px;">FIND | Tour</div>
<div class="b" style="left:667px;top:649px;width:8px;height:8px;border-radius:50%;background:#35a23d"></div>
<div class="t" style="left:680.30px;top:644.99px;font-size:13px;line-height:17px;color:#f0f0f0;letter-spacing:-0.440px;">Closed</div>
<div class="t" style="left:742.10px;top:644.99px;font-size:13px;line-height:17px;color:#f0f0f0;letter-spacing:-0.512px;">TSG_Agile\FIND</div>
<div class="t" style="left:1042.10px;top:644.99px;font-size:13px;line-height:17px;color:#f0f0f0;letter-spacing:-0.185px;">TSG_Agile\FIND\Iteration 25</div>
<div class="t" style="left:72.00px;top:674.99px;font-size:13px;line-height:17px;color:#f0f0f0;letter-spacing:-0.281px;">40086</div>
<div class="t" style="left:142.30px;top:674.99px;font-size:13px;line-height:17px;color:#f0f0f0;letter-spacing:-1.092px;">Task</div>
<svg class="b" style="left:223px;top:675.5px;" width="12" height="15" viewBox="0 0 12 15"><path d="M0.6 3h10.8v11.6H0.6z" fill="#f2cc1e"/><path d="M2.8 3.6L4.6 0.6h2.8l1.8 3z" fill="#f2cc1e" stroke="#201f1e" stroke-width=".9"/><path d="M3.6 3.9h4.8" stroke="#3a3000" stroke-width=".9"/><path d="M2.6 10.2l1.9 1.7 4.2-4.4" stroke="#2a2400" stroke-width="1.1" fill="none"/></svg>
<div class="t" style="left:241.00px;top:674.99px;font-size:13px;line-height:17px;color:#f0f0f0;letter-spacing:-0.149px;">FIND | Staff Service V4 | Update Profile | Confirmation Modal | HTML/CSS</div>
<div class="b" style="left:667px;top:679px;width:8px;height:8px;border-radius:50%;background:#35a23d"></div>
<div class="t" style="left:680.30px;top:674.99px;font-size:13px;line-height:17px;color:#f0f0f0;letter-spacing:-0.440px;">Closed</div>
<div class="t" style="left:742.10px;top:674.99px;font-size:13px;line-height:17px;color:#f0f0f0;letter-spacing:-0.512px;">TSG_Agile\FIND</div>
<div class="t" style="left:1042.10px;top:674.99px;font-size:13px;line-height:17px;color:#f0f0f0;letter-spacing:-0.185px;">TSG_Agile\FIND\Iteration 25</div>
<div class="t" style="left:72.00px;top:704.99px;font-size:13px;line-height:17px;color:#f0f0f0;letter-spacing:-0.281px;">40603</div>
<div class="t" style="left:142.30px;top:704.99px;font-size:13px;line-height:17px;color:#f0f0f0;letter-spacing:-1.092px;">Task</div>
<svg class="b" style="left:223px;top:705.5px;" width="12" height="15" viewBox="0 0 12 15"><path d="M0.6 3h10.8v11.6H0.6z" fill="#f2cc1e"/><path d="M2.8 3.6L4.6 0.6h2.8l1.8 3z" fill="#f2cc1e" stroke="#201f1e" stroke-width=".9"/><path d="M3.6 3.9h4.8" stroke="#3a3000" stroke-width=".9"/><path d="M2.6 10.2l1.9 1.7 4.2-4.4" stroke="#2a2400" stroke-width="1.1" fill="none"/></svg>
<div class="t" style="left:241.00px;top:704.99px;font-size:13px;line-height:17px;color:#f0f0f0;letter-spacing:-0.067px;">FIND | Staff Profile | Contact Info | Mailing Address</div>
<div class="b" style="left:667px;top:709px;width:8px;height:8px;border-radius:50%;background:#35a23d"></div>
<div class="t" style="left:680.30px;top:704.99px;font-size:13px;line-height:17px;color:#f0f0f0;letter-spacing:-0.440px;">Closed</div>
<div class="t" style="left:742.10px;top:704.99px;font-size:13px;line-height:17px;color:#f0f0f0;letter-spacing:-0.512px;">TSG_Agile\FIND</div>
<div class="t" style="left:1042.10px;top:704.99px;font-size:13px;line-height:17px;color:#f0f0f0;letter-spacing:-0.185px;">TSG_Agile\FIND\Iteration 25</div>
<div class="t" style="left:72.00px;top:734.99px;font-size:13px;line-height:17px;color:#f0f0f0;letter-spacing:-0.281px;">40606</div>
<div class="t" style="left:142.30px;top:734.99px;font-size:13px;line-height:17px;color:#f0f0f0;letter-spacing:-1.092px;">Task</div>
<svg class="b" style="left:223px;top:735.5px;" width="12" height="15" viewBox="0 0 12 15"><path d="M0.6 3h10.8v11.6H0.6z" fill="#f2cc1e"/><path d="M2.8 3.6L4.6 0.6h2.8l1.8 3z" fill="#f2cc1e" stroke="#201f1e" stroke-width=".9"/><path d="M3.6 3.9h4.8" stroke="#3a3000" stroke-width=".9"/><path d="M2.6 10.2l1.9 1.7 4.2-4.4" stroke="#2a2400" stroke-width="1.1" fill="none"/></svg>
<div class="t" style="left:241.00px;top:734.99px;font-size:13px;line-height:17px;color:#f0f0f0;letter-spacing:-0.086px;">FIND | Staff Profile | Location | Assigned District | Hide</div>
<div class="b" style="left:667px;top:739px;width:8px;height:8px;border-radius:50%;background:#35a23d"></div>
<div class="t" style="left:680.30px;top:734.99px;font-size:13px;line-height:17px;color:#f0f0f0;letter-spacing:-0.440px;">Closed</div>
<div class="t" style="left:742.10px;top:734.99px;font-size:13px;line-height:17px;color:#f0f0f0;letter-spacing:-0.512px;">TSG_Agile\FIND</div>
<div class="t" style="left:1042.10px;top:734.99px;font-size:13px;line-height:17px;color:#f0f0f0;letter-spacing:-0.185px;">TSG_Agile\FIND\Iteration 25</div>
<div class="t" style="left:72.00px;top:764.99px;font-size:13px;line-height:17px;color:#f0f0f0;letter-spacing:-0.281px;">40691</div>
<div class="t" style="left:142.30px;top:764.99px;font-size:13px;line-height:17px;color:#f0f0f0;letter-spacing:-1.092px;">Task</div>
<svg class="b" style="left:223px;top:765.5px;" width="12" height="15" viewBox="0 0 12 15"><path d="M0.6 3h10.8v11.6H0.6z" fill="#f2cc1e"/><path d="M2.8 3.6L4.6 0.6h2.8l1.8 3z" fill="#f2cc1e" stroke="#201f1e" stroke-width=".9"/><path d="M3.6 3.9h4.8" stroke="#3a3000" stroke-width=".9"/><path d="M2.6 10.2l1.9 1.7 4.2-4.4" stroke="#2a2400" stroke-width="1.1" fill="none"/></svg>
<div class="t" style="left:241.00px;top:764.99px;font-size:13px;line-height:17px;color:#f0f0f0;letter-spacing:-0.097px;">FIND | Update Profile | Contractor | Employer | Help Text</div>
<div class="b" style="left:667px;top:769px;width:8px;height:8px;border-radius:50%;background:#35a23d"></div>
<div class="t" style="left:680.30px;top:764.99px;font-size:13px;line-height:17px;color:#f0f0f0;letter-spacing:-0.440px;">Closed</div>
<div class="t" style="left:742.10px;top:764.99px;font-size:13px;line-height:17px;color:#f0f0f0;letter-spacing:-0.512px;">TSG_Agile\FIND</div>
<div class="t" style="left:1042.10px;top:764.99px;font-size:13px;line-height:17px;color:#f0f0f0;letter-spacing:-0.185px;">TSG_Agile\FIND\Iteration 25</div>
<div class="t" style="left:72.00px;top:794.99px;font-size:13px;line-height:17px;color:#f0f0f0;letter-spacing:-0.281px;">40694</div>
<div class="t" style="left:142.30px;top:794.99px;font-size:13px;line-height:17px;color:#f0f0f0;letter-spacing:-1.092px;">Task</div>
<svg class="b" style="left:223px;top:795.5px;" width="12" height="15" viewBox="0 0 12 15"><path d="M0.6 3h10.8v11.6H0.6z" fill="#f2cc1e"/><path d="M2.8 3.6L4.6 0.6h2.8l1.8 3z" fill="#f2cc1e" stroke="#201f1e" stroke-width=".9"/><path d="M3.6 3.9h4.8" stroke="#3a3000" stroke-width=".9"/><path d="M2.6 10.2l1.9 1.7 4.2-4.4" stroke="#2a2400" stroke-width="1.1" fill="none"/></svg>
<div class="t" style="left:241.00px;top:794.99px;font-size:13px;line-height:17px;color:#f0f0f0;letter-spacing:-0.029px;">FIND | Staff Profile | Attributes | Contact Info | Mail Station</div>
<div class="b" style="left:667px;top:799px;width:8px;height:8px;border-radius:50%;background:#35a23d"></div>
<div class="t" style="left:680.30px;top:794.99px;font-size:13px;line-height:17px;color:#f0f0f0;letter-spacing:-0.440px;">Closed</div>
<div class="t" style="left:742.10px;top:794.99px;font-size:13px;line-height:17px;color:#f0f0f0;letter-spacing:-0.512px;">TSG_Agile\FIND</div>
<div class="t" style="left:1042.10px;top:794.99px;font-size:13px;line-height:17px;color:#f0f0f0;letter-spacing:-0.185px;">TSG_Agile\FIND\Iteration 25</div>
<div class="t" style="left:72.00px;top:824.99px;font-size:13px;line-height:17px;color:#f0f0f0;letter-spacing:-0.281px;">40860</div>
<div class="t" style="left:142.30px;top:824.99px;font-size:13px;line-height:17px;color:#f0f0f0;letter-spacing:-1.092px;">Task</div>
<svg class="b" style="left:223px;top:825.5px;" width="12" height="15" viewBox="0 0 12 15"><path d="M0.6 3h10.8v11.6H0.6z" fill="#f2cc1e"/><path d="M2.8 3.6L4.6 0.6h2.8l1.8 3z" fill="#f2cc1e" stroke="#201f1e" stroke-width=".9"/><path d="M3.6 3.9h4.8" stroke="#3a3000" stroke-width=".9"/><path d="M2.6 10.2l1.9 1.7 4.2-4.4" stroke="#2a2400" stroke-width="1.1" fill="none"/></svg>
<div class="t" style="left:241.00px;top:824.99px;font-size:13px;line-height:17px;color:#f0f0f0;letter-spacing:-0.099px;">FIND | Update Profile | Contractor | Position Type | Help Text</div>
<div class="b" style="left:667px;top:829px;width:8px;height:8px;border-radius:50%;background:#35a23d"></div>
<div class="t" style="left:680.30px;top:824.99px;font-size:13px;line-height:17px;color:#f0f0f0;letter-spacing:-0.440px;">Closed</div>
<div class="t" style="left:742.10px;top:824.99px;font-size:13px;line-height:17px;color:#f0f0f0;letter-spacing:-0.512px;">TSG_Agile\FIND</div>
<div class="t" style="left:1042.10px;top:824.99px;font-size:13px;line-height:17px;color:#f0f0f0;letter-spacing:-0.185px;">TSG_Agile\FIND\Iteration 25</div>
<div class="t" style="left:72.00px;top:854.99px;font-size:13px;line-height:17px;color:#f0f0f0;letter-spacing:-0.281px;">41046</div>
<div class="t" style="left:142.30px;top:854.99px;font-size:13px;line-height:17px;color:#f0f0f0;letter-spacing:-1.092px;">Task</div>
<svg class="b" style="left:223px;top:855.5px;" width="12" height="15" viewBox="0 0 12 15"><path d="M0.6 3h10.8v11.6H0.6z" fill="#f2cc1e"/><path d="M2.8 3.6L4.6 0.6h2.8l1.8 3z" fill="#f2cc1e" stroke="#201f1e" stroke-width=".9"/><path d="M3.6 3.9h4.8" stroke="#3a3000" stroke-width=".9"/><path d="M2.6 10.2l1.9 1.7 4.2-4.4" stroke="#2a2400" stroke-width="1.1" fill="none"/></svg>
<div class="t" style="left:241.00px;top:854.99px;font-size:13px;line-height:17px;color:#f0f0f0;letter-spacing:-0.153px;">FIND | Tour | Production Files</div>
<div class="b" style="left:667px;top:859px;width:8px;height:8px;border-radius:50%;background:#35a23d"></div>
<div class="t" style="left:680.30px;top:854.99px;font-size:13px;line-height:17px;color:#f0f0f0;letter-spacing:-0.440px;">Closed</div>
<div class="t" style="left:742.10px;top:854.99px;font-size:13px;line-height:17px;color:#f0f0f0;letter-spacing:-0.512px;">TSG_Agile\FIND</div>
<div class="t" style="left:1042.10px;top:854.99px;font-size:13px;line-height:17px;color:#f0f0f0;letter-spacing:-0.185px;">TSG_Agile\FIND\Iteration 25</div>
<div class="t" style="left:72.00px;top:884.99px;font-size:13px;line-height:17px;color:#f0f0f0;letter-spacing:-0.281px;">41047</div>
<div class="t" style="left:142.30px;top:884.99px;font-size:13px;line-height:17px;color:#f0f0f0;letter-spacing:-1.092px;">Task</div>
<svg class="b" style="left:223px;top:885.5px;" width="12" height="15" viewBox="0 0 12 15"><path d="M0.6 3h10.8v11.6H0.6z" fill="#f2cc1e"/><path d="M2.8 3.6L4.6 0.6h2.8l1.8 3z" fill="#f2cc1e" stroke="#201f1e" stroke-width=".9"/><path d="M3.6 3.9h4.8" stroke="#3a3000" stroke-width=".9"/><path d="M2.6 10.2l1.9 1.7 4.2-4.4" stroke="#2a2400" stroke-width="1.1" fill="none"/></svg>
<div class="t" style="left:241.00px;top:884.99px;font-size:13px;line-height:17px;color:#f0f0f0;letter-spacing:-0.253px;">FIND | Tour | Access Link</div>
<div class="b" style="left:667px;top:889px;width:8px;height:8px;border-radius:50%;background:#35a23d"></div>
<div class="t" style="left:680.30px;top:884.99px;font-size:13px;line-height:17px;color:#f0f0f0;letter-spacing:-0.440px;">Closed</div>
<div class="t" style="left:742.10px;top:884.99px;font-size:13px;line-height:17px;color:#f0f0f0;letter-spacing:-0.512px;">TSG_Agile\FIND</div>
<div class="t" style="left:1042.10px;top:884.99px;font-size:13px;line-height:17px;color:#f0f0f0;letter-spacing:-0.185px;">TSG_Agile\FIND\Iteration 25</div>
<div class="t" style="left:72.00px;top:914.99px;font-size:13px;line-height:17px;color:#f0f0f0;letter-spacing:-0.281px;">41357</div>
<div class="t" style="left:142.30px;top:914.99px;font-size:13px;line-height:17px;color:#f0f0f0;letter-spacing:-1.092px;">Task</div>
<svg class="b" style="left:223px;top:915.5px;" width="12" height="15" viewBox="0 0 12 15"><path d="M0.6 3h10.8v11.6H0.6z" fill="#f2cc1e"/><path d="M2.8 3.6L4.6 0.6h2.8l1.8 3z" fill="#f2cc1e" stroke="#201f1e" stroke-width=".9"/><path d="M3.6 3.9h4.8" stroke="#3a3000" stroke-width=".9"/><path d="M2.6 10.2l1.9 1.7 4.2-4.4" stroke="#2a2400" stroke-width="1.1" fill="none"/></svg>
<div class="t" style="left:241.00px;top:914.99px;font-size:13px;line-height:17px;color:#f0f0f0;letter-spacing:-0.105px;">FIND | Update Profile | Request Update Form | Organization Info Field ...</div>
<div class="b" style="left:667px;top:919px;width:8px;height:8px;border-radius:50%;background:#35a23d"></div>
<div class="t" style="left:680.30px;top:914.99px;font-size:13px;line-height:17px;color:#f0f0f0;letter-spacing:-0.440px;">Closed</div>
<div class="t" style="left:742.10px;top:914.99px;font-size:13px;line-height:17px;color:#f0f0f0;letter-spacing:-0.512px;">TSG_Agile\FIND</div>
<div class="t" style="left:1042.10px;top:914.99px;font-size:13px;line-height:17px;color:#f0f0f0;letter-spacing:-0.185px;">TSG_Agile\FIND\Iteration 25</div>
<div class="b" style="left:1903px;top:242px;width:17px;height:695px;background:#f0f0f0"></div>
<div class="b" style="left:1905px;top:517px;width:13px;height:84px;background:#c2c2c2"></div>
<svg class="b" style="left:1906px;top:246.5px;" width="11" height="8" viewBox="0 0 11 8"><path d="M1 6.5L5.5 2 10 6.5z" fill="#606060"/></svg>
<svg class="b" style="left:1906px;top:925px;" width="11" height="8" viewBox="0 0 11 8"><path d="M1 1.5L5.5 6 10 1.5z" fill="#606060"/></svg>
</body></html>
